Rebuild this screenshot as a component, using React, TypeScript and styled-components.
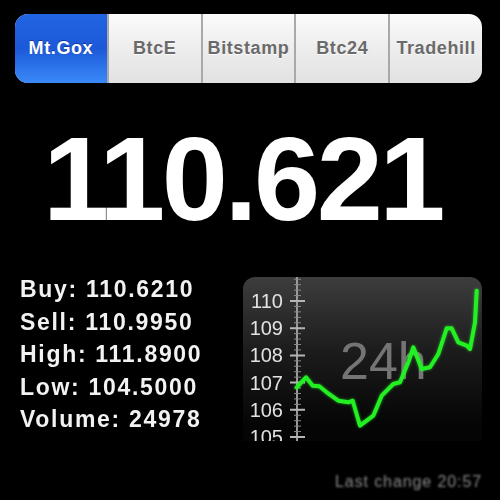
import React from "react";
import styled, { createGlobalStyle } from "styled-components";

const GlobalStyle = createGlobalStyle`
	html, body {
		margin: 0;
		padding: 0;
		background: #000;
	}
	body {
		font-family: "Liberation Sans", Arial, Helvetica, sans-serif;
	}
`;

const Page = styled.div`
	width: 500px;
	height: 500px;
	background: #000;
	padding: 14px 18px 0 15px;
	box-sizing: border-box;
	overflow: hidden;
`;

const Segmented = styled.div`
	display: flex;
	height: 69px;
	border-radius: 13px;
	overflow: hidden;
	background: linear-gradient(#fbfbfb, #ededed 50%, #e2e2e2);
`;

const Segment = styled.div<{ active?: boolean }>`
	flex: 1;
	display: flex;
	align-items: center;
	justify-content: center;
	font-size: 18px;
	font-weight: bold;
	letter-spacing: 0.6px;
	color: ${(p) => (p.active ? "#fff" : "#6a6a6a")};
	text-shadow: ${(p) =>
		p.active ? "0 -1px 0 rgba(0,0,60,0.4)" : "0 1px 0 rgba(255,255,255,0.9)"};
	background: ${(p) =>
		p.active ? "linear-gradient(#2264e2, #1c59d8 50%, #3a8af8)" : "transparent"};
	& + & {
		border-left: 2px solid #a9a9a9;
	}
`;

const Price = styled.div`
	margin-top: 36px;
	padding-right: 12px;
	text-align: center;
	color: #fff;
	font-size: 119px;
	line-height: 119px;
	font-weight: bold;
	letter-spacing: -3.5px;
`;

const BottomRow = styled.div`
	display: flex;
	justify-content: space-between;
	align-items: flex-start;
	margin-top: 35px;
`;

const Stats = styled.div`
	padding-left: 5px;
	display: flex;
	flex-direction: column;
`;

const StatLine = styled.div`
	font-size: 23px;
	line-height: 32.5px;
	font-weight: bold;
	color: #f2f2f2;
	letter-spacing: 1.7px;
	filter: blur(0.4px);
`;

const ChartPanel = styled.div`
	width: 239px;
	height: 164px;
	margin-top: 4px;
	border-radius: 12px 12px 0 0;
	overflow: hidden;
	background: linear-gradient(#3d3d3d, #1c1c1c 45%, #050505 90%);
	filter: blur(0.3px);
`;

const Footer = styled.div`
	margin-top: 32px;
	text-align: right;
	font-size: 16px;
	letter-spacing: 0.9px;
	color: #8a8a8a;
	filter: blur(1.1px);
`;

const exchanges = ["Mt.Gox", "BtcE", "Bitstamp", "Btc24", "Tradehill"];

const stats = [
	["Buy", "110.6210"],
	["Sell", "110.9950"],
	["High", "111.8900"],
	["Low", "104.5000"],
	["Volume", "24978"],
];

const points: [number, number][] = [
	[53.7, 110.3], [63, 100.3], [69.7, 108.7], [76.3, 109.3], [83.7, 115.3],
	[95.3, 123.7], [105.3, 125.3], [109.7, 123.7], [117, 148.7], [130.3, 138.7],
	[138.7, 118.7], [150.3, 107], [157, 105.3], [165.3, 85.3], [170.3, 70.3],
	[178.7, 92], [187, 90.3], [195.3, 77], [203.7, 51.3], [208.7, 51.3],
	[215.3, 65.3], [223.7, 68.7], [227, 72], [232, 45.3], [233.7, 13.7],
];

const Chart = () => {
	const step = 27.2;
	const labels = [110, 109, 108, 107, 106, 105];
	const minor: number[] = [];
	for (let i = -4; i < 35; i++) minor.push(24 + (i * step) / 5);
	return (
		<svg width="239" height="164" viewBox="0 0 239 164">
			<text x="97" y="102" fontSize="52" fill="#747474" fontFamily="Liberation Sans, Arial, sans-serif">
				24h
			</text>
			<line x1="54" y1="0" x2="54" y2="164" stroke="#9a9a9a" strokeWidth="2" />
			{minor.map((y, i) => (
				<line key={i} x1="51" y1={y} x2="58" y2={y} stroke="#8a8a8a" strokeWidth="1" />
			))}
			{labels.map((v, i) => {
				const y = 24 + i * step;
				return (
					<g key={v}>
						<line x1="47" y1={y} x2="62" y2={y} stroke="#b5b5b5" strokeWidth="2" />
						<text
							x="40"
							y={y + 7}
							fontSize="20"
							fill="#e2e2e2"
							textAnchor="end"
							fontFamily="Liberation Sans, Arial, sans-serif"
						>
							{v}
						</text>
					</g>
				);
			})}
			<polyline
				points={points.map((p) => p.join(",")).join(" ")}
				fill="none"
				stroke="#22f022"
				strokeWidth="4"
				strokeLinejoin="round"
				strokeLinecap="round"
				style={{ filter: "drop-shadow(0 0 1.5px rgba(40,255,40,0.6))" }}
			/>
		</svg>
	);
};

const App = () => {
	return (
		<Page>
			<GlobalStyle />
			<Segmented>
				{exchanges.map((name, i) => (
					<Segment key={name} active={i === 0}>
						{name}
					</Segment>
				))}
			</Segmented>
			<Price>110.621</Price>
			<BottomRow>
				<Stats>
					{stats.map(([k, v]) => (
						<StatLine key={k}>
							{k}: {v}
						</StatLine>
					))}
				</Stats>
				<ChartPanel>
					<Chart />
				</ChartPanel>
			</BottomRow>
			<Footer>Last change 20:57</Footer>
		</Page>
	);
};

export default App;
